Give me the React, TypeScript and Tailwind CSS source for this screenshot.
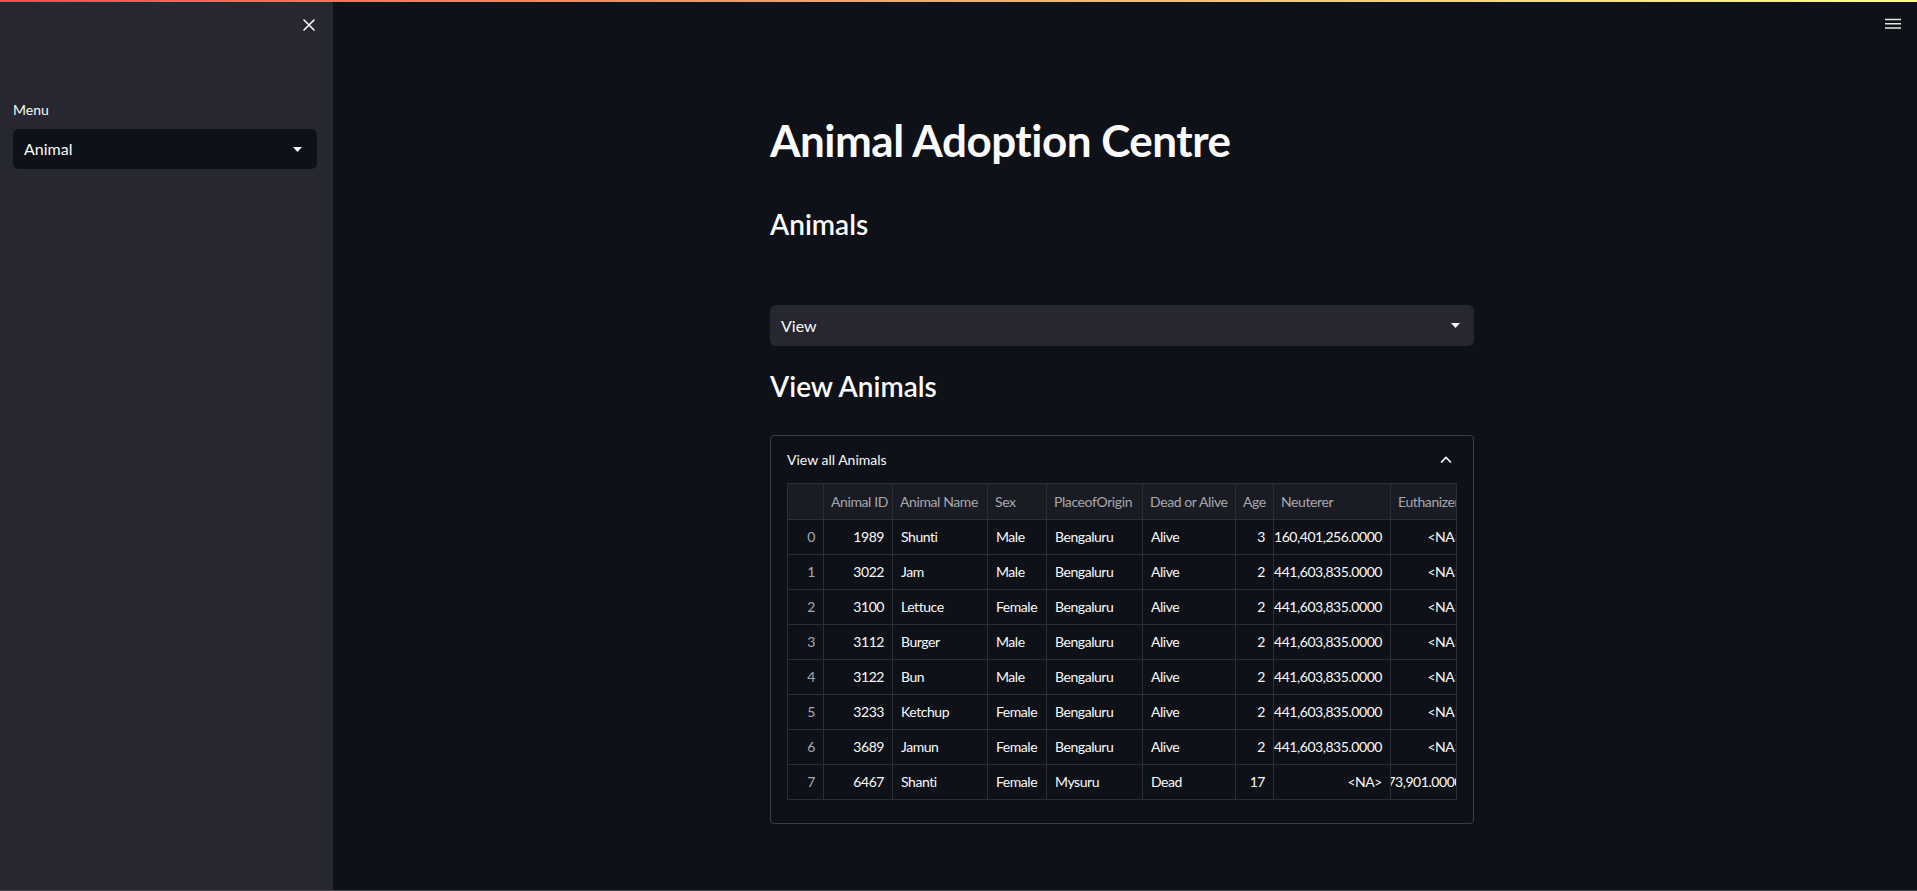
import React from "react";

const headers = ["", "Animal ID", "Animal Name", "Sex", "PlaceofOrigin", "Dead or Alive", "Age", "Neuterer", "Euthanizer"];
const rightAlign = [true, true, false, false, false, false, true, true, true];

const rows: string[][] = [
  ["0", "1989", "Shunti", "Male", "Bengaluru", "Alive", "3", "160,401,256.0000", "<NA>"],
  ["1", "3022", "Jam", "Male", "Bengaluru", "Alive", "2", "441,603,835.0000", "<NA>"],
  ["2", "3100", "Lettuce", "Female", "Bengaluru", "Alive", "2", "441,603,835.0000", "<NA>"],
  ["3", "3112", "Burger", "Male", "Bengaluru", "Alive", "2", "441,603,835.0000", "<NA>"],
  ["4", "3122", "Bun", "Male", "Bengaluru", "Alive", "2", "441,603,835.0000", "<NA>"],
  ["5", "3233", "Ketchup", "Female", "Bengaluru", "Alive", "2", "441,603,835.0000", "<NA>"],
  ["6", "3689", "Jamun", "Female", "Bengaluru", "Alive", "2", "441,603,835.0000", "<NA>"],
  ["7", "6467", "Shanti", "Female", "Mysuru", "Dead", "17", "<NA>", "223,973,901.0000"],
];

function Caret() {
  return (
    <svg width="9" height="5" viewBox="0 0 9 5" className="shrink-0">
      <path d="M0 0 L9 0 L4.5 5 Z" fill="#fafafa" />
    </svg>
  );
}

function DataTable() {
  return (
    <div className="w-[670px] overflow-hidden border border-b-0 border-[#2c2f37]">
      <div className="grid grid-cols-[36px_69px_95px_59px_96px_93px_38px_117px_80px] w-max">
        {headers.map((h, i) => (
          <div
            key={"h" + i}
            className="h-[36px] pb-[1px] flex items-center pl-[7px] pr-[2px] overflow-hidden whitespace-nowrap bg-[#1a1c23] border-r border-b border-[#2c2f37] text-[14px] tracking-[-0.4px] text-[#a6a8af]"
          >
            {h}
          </div>
        ))}
        {rows.map((r, ri) =>
          r.map((c, ci) => {
            const numeric = /^\d/.test(c) && ci === 8;
            return (
              <div
                key={ri + "-" + ci}
                className={
                  "h-[35px] pb-[2px] flex items-center overflow-hidden whitespace-nowrap border-r border-b border-[#2c2f37] text-[14px] tracking-[-0.45px] pr-[8px] " +
                  (numeric ? "pl-0 " : "pl-[8px] ") +
                  (rightAlign[ci] ? "justify-end " : "justify-start ") +
                  (ci === 0 ? "text-[#a6a8af]" : "text-[#fafafa]")
                }
              >
                {numeric ? (
                  <span className="block max-w-full overflow-hidden whitespace-nowrap [direction:rtl]">{c}</span>
                ) : (
                  <span className="shrink-0">{c}</span>
                )}
              </div>
            );
          })
        )}
      </div>
    </div>
  );
}

export default function App() {
  return (
    <div className="relative flex h-[891px] w-full overflow-hidden bg-[#0e1117] text-[#fafafa] font-['Source_Sans_Pro',Lato,sans-serif]">
      <div className="absolute left-0 right-0 top-0 h-[2px] bg-gradient-to-r from-[#ff4b4b] to-[#fffd80] z-10" />
      <div className="absolute left-0 right-0 bottom-0 h-[1px] bg-[#45464c] z-10" />

      {/* Sidebar */}
      <aside className="w-[333px] shrink-0 bg-[#262730] flex flex-col pl-[13px] pr-[16px]">
        <div className="flex justify-end pt-[19px] pr-[2px]">
          <svg width="12" height="12" viewBox="0 0 12 12">
            <path d="M1 1 L11 11 M11 1 L1 11" stroke="#fafafa" strokeWidth="1.6" strokeLinecap="round" />
          </svg>
        </div>
        <div className="mt-[69px] text-[14px] leading-[20px]">Menu</div>
        <div className="mt-[9px] h-[40px] rounded-[6px] bg-[#0e1117] flex items-center justify-between pl-[11px] pr-[15px]">
          <span className="text-[16px]">Animal</span>
          <Caret />
        </div>
      </aside>

      {/* Main */}
      <main className="flex-1 pl-[437px] pt-[114px]">
        <div className="w-[704px] flex flex-col">
          <h1 className="text-[44px] font-bold leading-[53px] tracking-[-0.5px]">Animal Adoption Centre</h1>
          <h2 className="mt-[40px] text-[28px] font-semibold leading-[34px]">Animals</h2>
          <div className="mt-[64px] h-[41px] rounded-[6px] bg-[#262730] flex items-center justify-between pl-[11px] pr-[14px]">
            <span className="text-[16px]">View</span>
            <Caret />
          </div>
          <h2 className="mt-[23px] text-[28px] font-semibold leading-[34px]">View Animals</h2>
          <div className="mt-[32px] border border-[#3d3f46] rounded-[4px] pb-[23px]">
            <div className="h-[47px] flex items-center justify-between pl-[16px] pr-[21px]">
              <span className="text-[14px]">View all Animals</span>
              <svg width="12" height="8" viewBox="0 0 12 8">
                <path d="M1 6.5 L6 1.5 L11 6.5" stroke="#fafafa" strokeWidth="1.6" fill="none" />
              </svg>
            </div>
            <div className="px-[16px]">
              <DataTable />
            </div>
          </div>
        </div>
      </main>

      <div className="absolute right-[16px] top-[18px]">
        <svg width="16" height="12" viewBox="0 0 16 12">
          <path d="M0 1.5 H16 M0 5.75 H16 M0 10 H16" stroke="#e6e6e8" strokeWidth="1.6" />
        </svg>
      </div>
    </div>
  );
}
